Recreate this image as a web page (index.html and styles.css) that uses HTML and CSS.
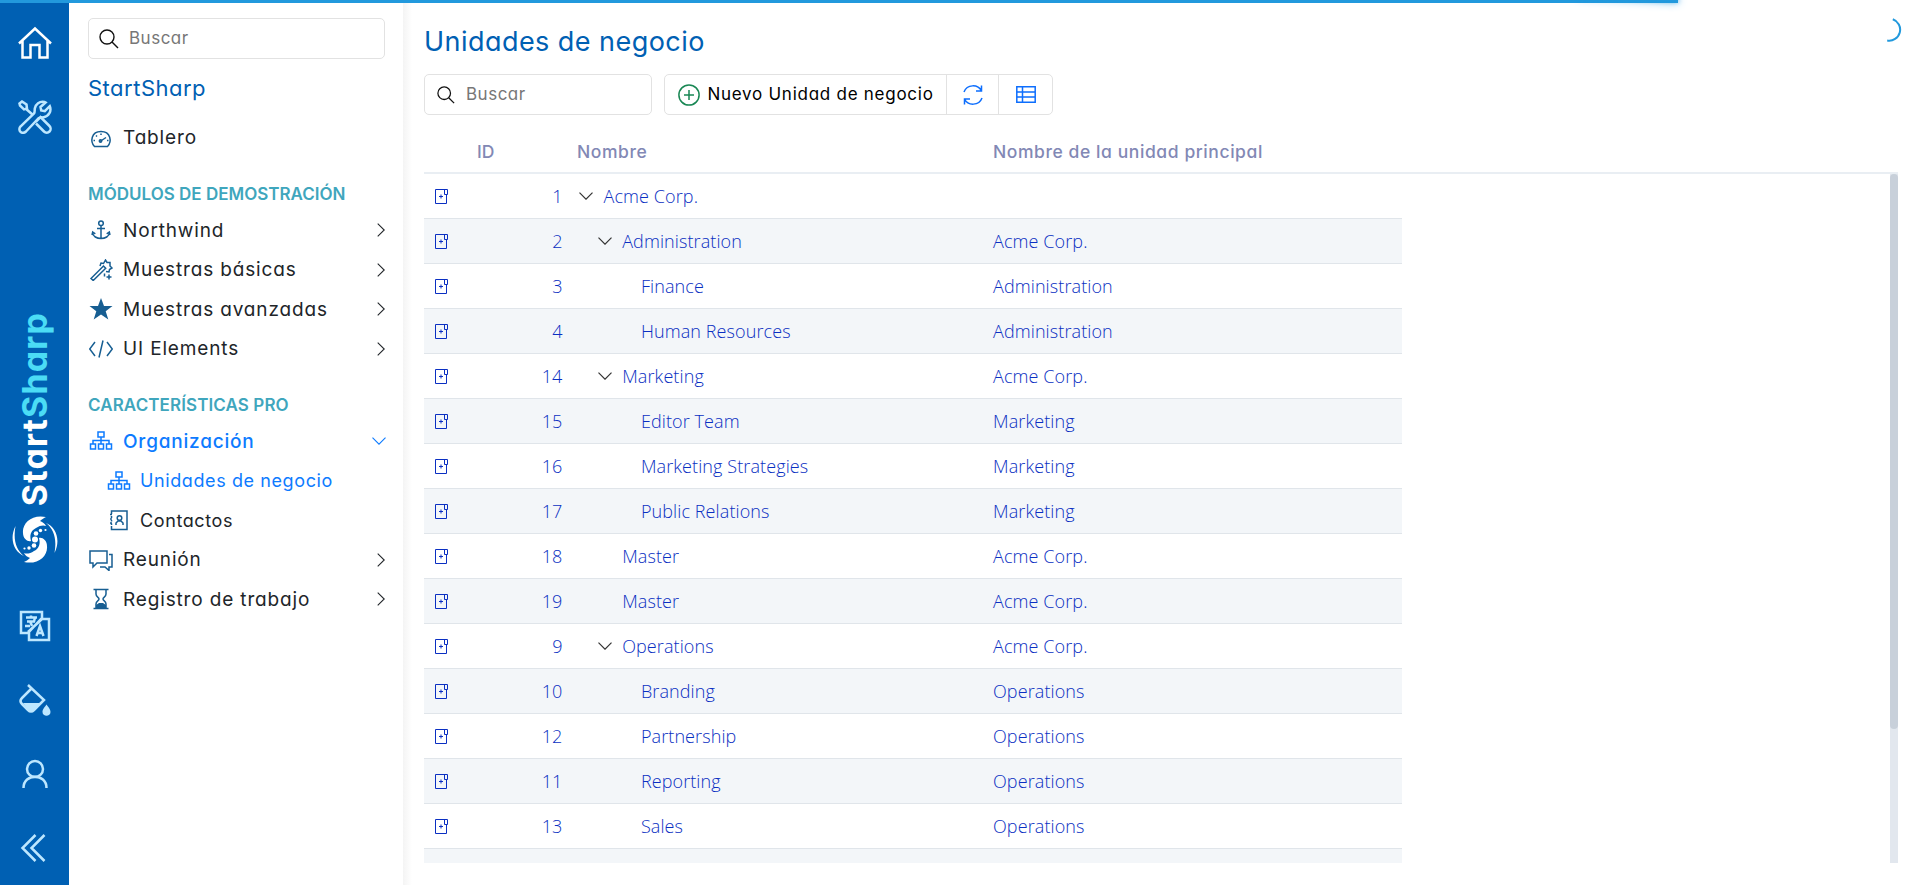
FILE: index.html
```html
<!DOCTYPE html>
<html lang="es">
<head>
<meta charset="utf-8">
<title>Unidades de negocio</title>
<link rel="stylesheet" href="styles.css">
</head>
<body>
<svg class="defs" width="0" height="0">
  <symbol id="search" viewBox="0 0 20 20"><circle cx="8" cy="8" r="7"/><path d="M13 13l6 6"/></symbol>
  <symbol id="right" viewBox="0 0 8 14"><path d="M.7.7L7.2 7 .7 13.3"/></symbol>
  <symbol id="down" viewBox="0 0 14 8"><path d="M.5.7L7 7.2 13.500.7"/></symbol>
  <symbol id="org" viewBox="0 0 24 20"><path d="M9 1h6v5H9zM1.500 13h5v5h-5zM9.500 13h5v5h-5zM17.500 13h5v5h-5zM12 6v7M4 13V9.500h16V13"/></symbol>
  <symbol id="add" viewBox="0 0 13 15"><path d="M.500.500h12v5h-3v-5M11.500 5.500v9H.5V.5M6 5.500v4M4 7.500h4"/></symbol>
</svg>
<div class="progress"></div>
<div class="app">
  <nav class="rail">
    <a class="rail-item home"><svg width="36" height="34" viewBox="0 0 36 34"><path d="M2 17.500L18 2.500l16 15M5.500 15v16.500h8V19h9v12.500h8V15"/></svg></a>
    <a class="rail-item"><svg width="34" height="34" viewBox="0 0 34 34"><path d="M7 8l8 7M1.500 3.500L4 1.500l4.500 3 .5 4-3 .8-4-3.800zM16 13.500c1-1.500.5-3 .8-5C17.500 4 21.500 1 26.500 2l1 .5-5 4.500.7 3.500 3.600.7 5-5c2 5-1 10-6 11-2 .4-3.500 0-5 .8L8 31.500c-2 2-4.500 1.500-5.500.3-1.500-1.500-1.500-4 .2-5.500zM18 21.500l4.500-4.500 9 9c1.500 1.500 1.500 4 0 5.500s-4 1.500-5.500 0l-8-8"/></svg></a>
    <div class="brand">
      <div class="brand-name">Start<span>Sharp</span></div>
      <svg width="46" height="47" viewBox="0 0 46 47"><path class="solid" d="M34 1C20-2 10 7 11 17c0 6 5 9 8 8-2-7 1-11 5-13 4-3 8-3 10-2-1-2-3-4-6-5 2-2 4-3 6-4zM12 46c14 3 24-6 23-16 0-6-5-9-8-8 2 7-1 11-5 13-4 3-8 3-10 2 1 2 3 4 6 5-2 2-4 3-6 4z"/><path class="solid" d="M3.500 10C-3 23 2 36 12 40 4 34 1 24 3.500 10zM42.500 37C49 24 44 11 34 7c8 6 11 16 8.500 30z"/><circle class="solid" cx="23" cy="23.500" r="3"/><circle class="solid" cx="24" cy="17.500" r="2.300"/><circle class="solid" cx="22" cy="29.500" r="2.300"/><circle class="solid" cx="28.500" cy="14.500" r="1.700"/><circle class="solid" cx="33.500" cy="14" r="1.100"/><circle class="solid" cx="17" cy="32" r="1.700"/><circle class="solid" cx="12.500" cy="32.500" r="1.100"/></svg>
    </div>
    <a class="rail-item"><svg width="32" height="32" viewBox="0 0 32 32"><path d="M9 23H2V2h21v7M22 9h8v21H10v-8zM23 9L9 22"/><path d="M7 7.500h11M12 5.500v2M8 11.500h7l1-4M6 16h5M11 11l2 5"/><path d="M17.500 26l3.500-10 3.500 10M19 23h5"/></svg></a>
    <a class="rail-item"><svg width="32" height="32" viewBox="0 0 32 32"><path d="M9 1l16 15-10 10c-2 2-4 2-6 0l-6-6c-2-2-2-4 0-6l9-9"/><path class="solid" d="M4 19h18l-8 8h-4zM27.500 20.500c-3 4-4 5.500-4 7.500 0 5 8 5 8 0 0-2-1-3.500-4-7.500z"/></svg></a>
    <a class="rail-item"><svg width="28" height="30" viewBox="0 0 28 30"><circle cx="14" cy="10" r="8"/><path d="M2.500 29c0-15 23-15 23 0"/></svg></a>
    <a class="rail-item last"><svg width="26" height="30" viewBox="0 0 26 30"><path d="M15.500 2L2.500 15l13 13M24.500 2l-13 13 13 13"/></svg></a>
  </nav>
  <aside class="sidebar">
    <label class="search"><svg><use href="#search"/></svg><span class="ph">Buscar</span></label>
    <div class="site">StartSharp</div>
    <a class="item first"><svg class="ic" viewBox="0 0 24 22"><path d="M5.500 19.500C1 15 2 4.500 12 4.500s11 10.500 6.500 15zM11 14.500l6-4M12 6.500v1.500M7 8.500l1 1M4.500 13.500h1.500M18 13.500h1.500"/><circle cx="11.500" cy="14" r="1.200"/></svg><span>Tablero</span></a>
    <div class="group g1">MÓDULOS DE DEMOSTRACIÓN</div>
    <a class="item"><svg class="ic" viewBox="0 0 24 22"><circle cx="12" cy="4.200" r="2.300"/><path d="M12 6.500V20M8 9.500h8M3.500 13.500c.5 8 16.500 8 17 0M3 16l.7-3 2.600 1.800M21 16l-.7-3-2.600 1.800"/></svg><span>Northwind</span><svg class="arrow"><use href="#right"/></svg></a>
    <a class="item"><svg class="ic" viewBox="0 0 24 22"><path d="M2 19.500L14.500 7l2.200 2.200L4.200 21.500zM11 7l1-3 2.500.5L16.500 1l1.500 2.500h3V7L23 9l-2.500 1.500-.5 2.500-3-.5M20 15.500v5M17.500 18h5M15.500 14.500v3"/></svg><span>Muestras básicas</span><svg class="arrow"><use href="#right"/></svg></a>
    <a class="item"><svg class="ic" viewBox="0 0 24 22"><path class="solid" d="M12 0l3 8h8.500l-6.800 5.200 2.600 8.300L12 16.600l-7.300 4.900 2.600-8.300L.5 8H9z"/></svg><span>Muestras avanzadas</span><svg class="arrow"><use href="#right"/></svg></a>
    <a class="item"><svg class="ic" viewBox="0 0 24 22"><path d="M6 4L.7 11 6 18M18 4l5.300 7L18 18M14 2.500l-4 17"/></svg><span>UI Elements</span><svg class="arrow"><use href="#right"/></svg></a>
    <div class="group g2">CARACTERÍSTICAS PRO</div>
    <a class="item active"><svg class="ic"><use href="#org"/></svg><span>Organización</span><svg class="arrow d"><use href="#down"/></svg></a>
    <a class="item sub active"><svg class="ic"><use href="#org"/></svg><span>Unidades de negocio</span></a>
    <a class="item sub"><svg class="ic" viewBox="0 0 24 22"><path d="M4.500 5V2H20v18.500H4.500V17M4.500 7v2M4.500 11v1.500M4.500 14.500v1.500M3 5.500h2M3 10h2M3 14h2M9 16v-2l2-2h3l2 2v2"/><circle cx="12.500" cy="9" r="2.300"/></svg><span>Contactos</span></a>
    <a class="item"><svg class="ic" viewBox="0 0 24 22"><path d="M1 2h17v12H8l-4 4v-4H1zM20 5.500h3V18h-3v3.500L16 18h-5"/></svg><span>Reunión</span><svg class="arrow"><use href="#right"/></svg></a>
    <a class="item"><svg class="ic" viewBox="0 0 24 22"><path d="M4.500 1.500h15M4.500 20.500h15M7 2v4c0 3 3 3 3 5s-3 2-3 5v4M17 2v4c0 3-3 3-3 5s3 2 3 5v4"/><path class="solid" d="M7 20v-3l3-2h4l3 2v3z"/></svg><span>Registro de trabajo</span><svg class="arrow"><use href="#right"/></svg></a>
  </aside>
  <main class="main">
    <h1>Unidades de negocio</h1>
    <div class="toolbar">
      <label class="search quick"><svg><use href="#search"/></svg><span class="ph">Buscar</span></label>
      <div class="buttons">
        <button class="new"><svg width="22" height="22" viewBox="0 0 22 22"><circle cx="11" cy="11" r="10.100"/><path d="M11 6v10M6 11h10"/></svg><span>Nuevo Unidad de negocio</span></button>
        <button class="refresh"><svg width="20" height="20" viewBox="0 0 20 20"><path d="M1 7C4-1 15-1 18.500 6M18.500.500V6H13M19 13c-3 8-14 8-17.500 1M1.500 19.500V14H7"/></svg></button>
        <button class="cols"><svg width="20" height="17" viewBox="0 0 20 17"><path d="M.8.800h18.400v15.400H.8zM6.500.8v15.400M.8 6h18.400M.8 11h18.400"/></svg></button>
      </div>
    </div>
    <div class="grid">
      <div class="head"><span class="h-id">ID</span><span class="h-name">Nombre</span><span>Nombre de la unidad principal</span></div>
      <div class="viewport">
        <div class="rows" id="rows"></div>
        <div class="scroll"><div class="thumb"></div></div>
      </div>
    </div>
    <svg class="spinner" width="24" height="24" viewBox="0 0 24 24"><path d="M14.800 1.300A11 11 0 0 1 9.200 22.500"/></svg>
  </main>
</div>
<script src="rows.js"></script>
</body>
</html>
```
FILE: styles.css
```css
* { box-sizing: border-box; }
body { margin: 0; height: 885px; overflow: hidden; background: #fff; font-family: Inter, "Open Sans", sans-serif; font-feature-settings: "cv11", "ss03"; color: #212529; }
svg { fill: none; stroke: currentColor; flex: none; }
.defs { position: absolute; }
.progress { position: absolute; z-index: 3; top: 0; left: 0; width: 1678px; height: 3px; background: #2299dd; }
.progress::after { content: ""; position: absolute; right: 0; top: 0; width: 100px; height: 100%; box-shadow: 0 0 10px #29d, 0 0 5px #29d; transform: rotate(3deg) translate(0, -4px); }
.app { display: flex; height: 885px; }
.rail { width: 69px; flex: none; background: #0060b3; color: #bde7ff; display: flex; flex-direction: column; padding-top: 6px; }
.rail-item { height: 74px; display: flex; align-items: center; justify-content: center; stroke-width: 2.5px; }
.rail-item.last { padding-right: 4px; }
.home { color: #fff; }
.solid { fill: currentColor; stroke: none; }
.brand { flex: 1; display: flex; flex-direction: column; align-items: center; justify-content: flex-end; gap: 10px; padding-bottom: 26px; color: #fff; }
.brand-name { writing-mode: vertical-rl; transform: rotate(180deg); font-size: 34px; line-height: 41px; font-weight: 700; letter-spacing: 1.100px; white-space: nowrap; }
.brand-name span { color: #4bdcf5; }
.sidebar { width: 334px; flex: none; padding: 18px 18px 0 19px; }
.search { display: flex; align-items: center; gap: 10px; height: 41px; padding-left: 10px; border: 1px solid #e2e2e2; border-radius: 5px; background: #fff; color: #111; }
.search svg { width: 20px; height: 20px; stroke-width: 1.4px; }
.ph { color: #777; font-size: 17px; letter-spacing: .5px; padding-bottom: 1px; }
.site { margin-top: 14px; line-height: 30px; font-size: 22px; font-weight: 430; letter-spacing: .5px; color: #0060b3; }
.item { display: flex; align-items: center; height: 39.500px; white-space: nowrap; color: #212529; font-size: 19px; font-weight: 430; letter-spacing: .85px; }
.item.first { margin-top: 15px; }
.ic { width: 24px; height: 22px; margin: 0 10px 0 1px; color: #175e92; stroke-width: 1.5px; }
.arrow { width: 8px; height: 14px; margin-left: auto; stroke-width: 1.1px; }
.arrow.d { width: 14px; height: 8px; margin-right: -1px; }
.active, .active .ic { color: #0d7bff; }
.item.active { font-weight: 500; letter-spacing: .8px; }
.item.sub { padding-left: 18px; font-size: 18px; font-weight: 370; letter-spacing: .6px; }
.item.sub .ic { margin-right: 9px; }
.group { height: 24px; line-height: 24px; font-size: 17px; font-weight: 600; color: #3fa6bd; white-space: nowrap; }
.g1 { margin-top: 24px; margin-bottom: 5px; letter-spacing: 0; }
.g2 { margin-top: 24px; margin-bottom: 5px; letter-spacing: .1px; }
.main { flex: 1; position: relative; padding: 0 22px 22px 21px; display: flex; flex-direction: column; background: linear-gradient(90deg, #f4f4f4, #fff 9px); }
h1 { margin: 22px 0 0; height: 40px; line-height: 40px; font-size: 27px; font-weight: 430; letter-spacing: .45px; color: #0060b3; }
.toolbar { display: flex; gap: 12px; margin-top: 12px; height: 41px; }
.quick { width: 228px; padding-left: 12px; gap: 11px; }
.quick svg { width: 18px; height: 18px; }
.buttons { display: flex; border: 1px solid #e2e2e2; border-radius: 5px; background: #fff; }
button { margin: 0; padding: 0; border: 0; border-left: 1px solid #e2e2e2; background: none; font: inherit; color: #0d6efd; display: flex; align-items: center; justify-content: center; stroke-width: 1.5px; }
.new { width: 281px; border: 0; padding-left: 1px; color: #198754; gap: 7px; white-space: nowrap; }
.new span { color: #000; font-size: 17px; letter-spacing: .74px; padding-bottom: 1px; }
.refresh { width: 52px; }
.cols { width: 54px; }
.grid { margin-top: 17px; flex: 1; min-height: 0; display: flex; flex-direction: column; }
.head { height: 42px; flex: none; display: flex; align-items: center; padding-bottom: 1px; border-bottom: 2px solid #e9eef3; color: #8288b5; font-size: 17.500px; font-weight: 500; letter-spacing: .58px; white-space: nowrap; }
.h-id { width: 153px; padding-left: 53px; letter-spacing: 0; }
.h-name { width: 416px; }
.viewport { flex: 1; min-height: 0; display: flex; justify-content: space-between; overflow: hidden; }
.rows { width: 978px; }
.row { height: 45px; display: grid; grid-template-columns: 34px 104.500px 430.500px 1fr; align-items: center; border-bottom: 1px solid #e0e5ea; background: #fff; color: #0a2fc2; font: 350 18px "Open Sans", sans-serif; letter-spacing: .1px; }
.row:nth-child(even) { background: #f3f6f9; }
.row .add { width: 13px; height: 15px; margin-left: 11px; stroke-width: 1px; }
.num { text-align: right; }
.name { display: flex; align-items: center; padding-left: calc(16.500px + var(--lv) * 18.700px); }
.tw { width: 14px; height: 8px; margin-right: 10.500px; color: #333; stroke-width: 1.200px; }
.scroll { width: 8px; background: #e2e7ee; }
.thumb { height: 555px; border-radius: 4px; background: #c8d0da; }
.spinner { position: absolute; right: 18px; top: 18px; color: #2299dd; stroke-width: 2px; }
```
FILE: rows.js
```js
// id, name, parent, indent level, expandable
const units = [
  [1, "Acme Corp.", "", 0, 1],
  [2, "Administration", "Acme Corp.", 1, 1],
  [3, "Finance", "Administration", 2, 0],
  [4, "Human Resources", "Administration", 2, 0],
  [14, "Marketing", "Acme Corp.", 1, 1],
  [15, "Editor Team", "Marketing", 2, 0],
  [16, "Marketing Strategies", "Marketing", 2, 0],
  [17, "Public Relations", "Marketing", 2, 0],
  [18, "Master", "Acme Corp.", 1, 0],
  [19, "Master", "Acme Corp.", 1, 0],
  [9, "Operations", "Acme Corp.", 1, 1],
  [10, "Branding", "Operations", 2, 0],
  [12, "Partnership", "Operations", 2, 0],
  [11, "Reporting", "Operations", 2, 0],
  [13, "Sales", "Operations", 2, 0]
];
document.getElementById("rows").innerHTML = units.map(([id, name, parent, level, open]) =>
  `<div class="row"><svg class="add"><use href="#add"/></svg><span class="num">${id}</span>` +
  `<span class="name" style="--lv:${level}"><svg class="tw">${open ? '<use href="#down"/>' : ""}</svg>${name}</span>` +
  `<span>${parent}</span></div>`).join("") + '<div class="row"></div>';
```
